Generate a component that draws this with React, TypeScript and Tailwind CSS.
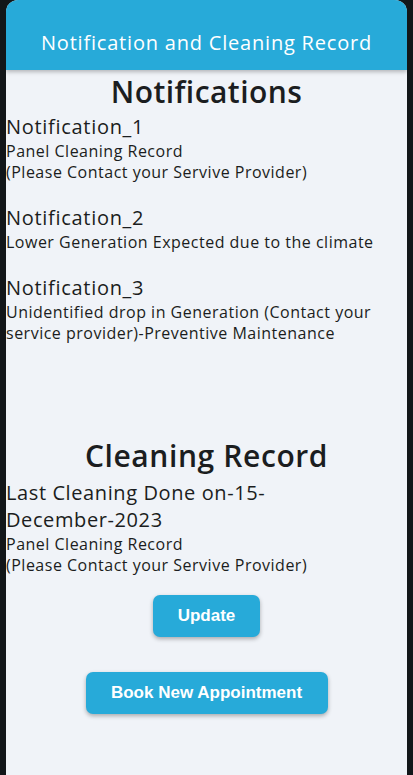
import React from "react";

const font = { fontFamily: "'Open Sans', 'Noto Sans', sans-serif" };

export default function App() {
  return (
    <div className="w-[413px] h-[775px] bg-[#121619] px-[6px] flex" style={font}>
      <div className="flex-1 bg-[#f0f3f8] rounded-t-[12px] overflow-hidden flex flex-col">
        <div className="h-[70px] shrink-0 bg-[#27aad9] flex items-center justify-center pt-[16px] shadow-[0_2px_4px_rgba(0,0,0,0.25)] relative z-10">
          <span className="text-white text-[20px] leading-none tracking-[0.8px]">Notification and Cleaning Record</span>
        </div>
        <div className="flex flex-col text-[#1b1d20]">
          <h1 className="text-center text-[30px] font-semibold leading-[42px] tracking-[0.45px] mt-[1px]">Notifications</h1>
          <div className="text-[20px] leading-[28px] tracking-[0.7px]">Notification_1</div>
          <div className="text-[16px] leading-[21px] tracking-[0.5px]">Panel Cleaning Record</div>
          <div className="text-[16px] leading-[21px] tracking-[0.5px]">(Please Contact your Servive Provider)</div>
          <div className="text-[20px] leading-[28px] tracking-[0.7px] mt-[21px]">Notification_2</div>
          <div className="text-[16px] leading-[21px] tracking-[0.5px]">Lower Generation Expected due to the climate</div>
          <div className="text-[20px] leading-[28px] tracking-[0.7px] mt-[21px]">Notification_3</div>
          <div className="text-[16px] leading-[21px] tracking-[0.5px]">Unidentified drop in Generation (Contact your service provider)-Preventive Maintenance</div>
          <h1 className="text-center text-[30px] font-semibold leading-[40px] tracking-[0.6px] mt-[92px]">Cleaning Record</h1>
          <div className="text-[20px] leading-[27px] tracking-[0.6px] w-[300px] mt-[3px]">Last Cleaning Done on-15-December-2023</div>
          <div className="text-[16px] leading-[21px] tracking-[0.5px] mt-[1px]">Panel Cleaning Record</div>
          <div className="text-[16px] leading-[21px] tracking-[0.5px]">(Please Contact your Servive Provider)</div>
          <div className="flex flex-col items-center mt-[19px] gap-[35px]" style={{ fontFamily: "'Liberation Sans', Arial, sans-serif" }}>
            <button className="h-[42px] w-[107px] rounded-[7px] bg-[#27aad9] text-white font-bold text-[17px] shadow-[0_2px_4px_rgba(0,0,0,0.3)]">Update</button>
            <button className="h-[42px] w-[242px] rounded-[7px] bg-[#27aad9] text-white font-bold text-[17px] shadow-[0_2px_4px_rgba(0,0,0,0.3)]">Book New Appointment</button>
          </div>
        </div>
      </div>
    </div>
  );
}
